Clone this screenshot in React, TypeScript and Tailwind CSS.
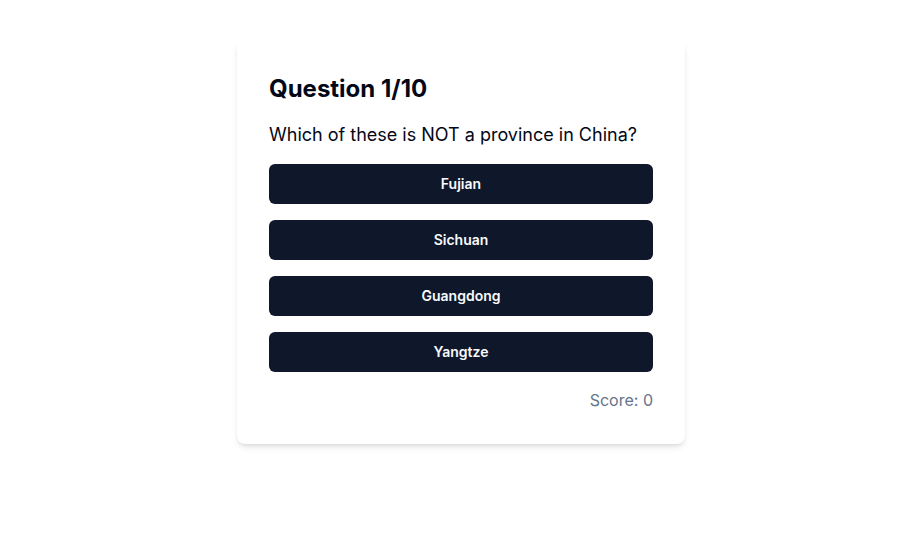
import React from "react";

export default function App() {
  const options = ["Fujian", "Sichuan", "Guangdong", "Yangtze"];
  return (
    <div
      className="min-h-screen bg-white flex justify-center pt-10 pl-2"
      style={{ fontFamily: "Inter, 'Noto Sans', sans-serif" }}
    >
      <div className="w-[448px] self-start bg-white rounded-lg shadow-md p-8">
        <h1 className="mt-px text-2xl font-bold text-[#020817] mb-4">Question 1/10</h1>
        <p className="text-lg text-[#020817] mb-[15px]">Which of these is NOT a province in China?</p>
        <div className="flex flex-col gap-4">
          {options.map((o) => (
            <button
              key={o}
              className="h-10 w-full rounded-md bg-[#0f172a] text-[#f8fafc] text-sm font-semibold"
            >
              {o}
            </button>
          ))}
        </div>
        <p className="mt-4 text-right text-base text-[#64748b]">Score: 0</p>
      </div>
    </div>
  );
}
